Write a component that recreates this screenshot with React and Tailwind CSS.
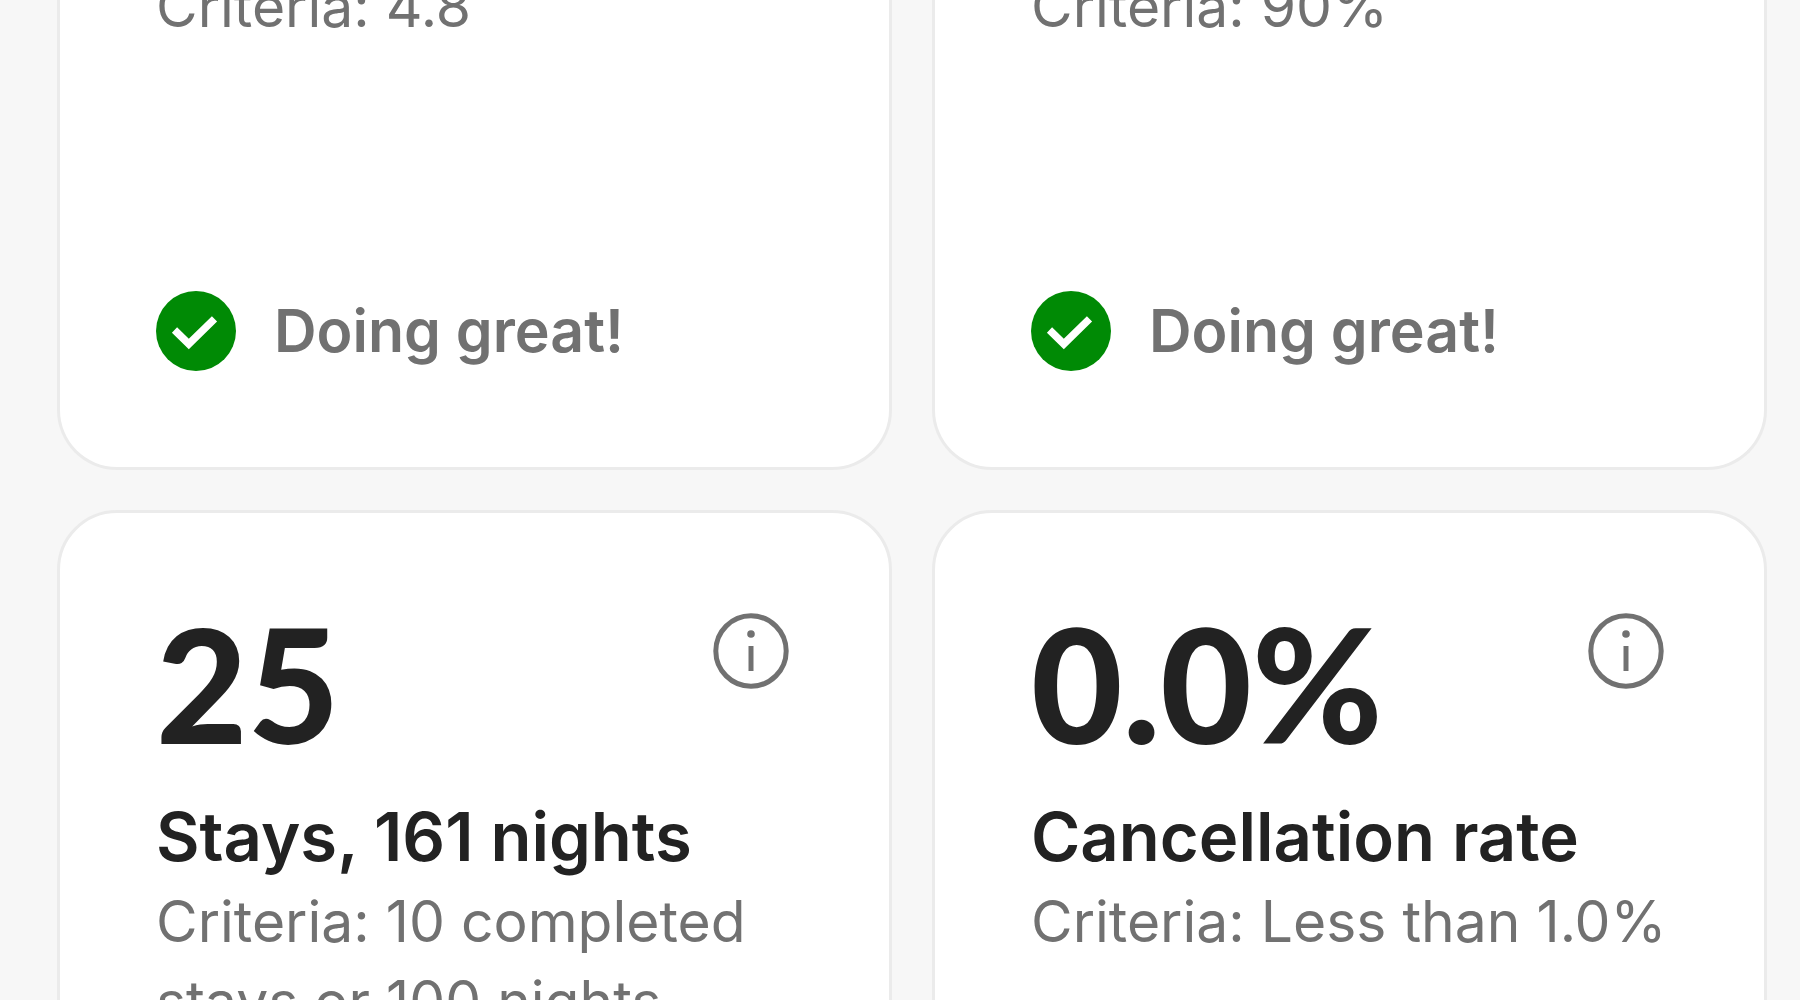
import React from "react";
import { clsx } from "clsx";

const topStats = [
  { id: "rating", criteria: "Criteria: 4.8" },
  { id: "response", criteria: "Criteria: 90%" },
];

const stats = [
  { id: "stays", value: "25", label: "Stays, 161 nights", criteria: "Criteria: 10 completed stays or 100 nights" },
  { id: "cancellation", value: "0.0%", label: "Cancellation rate", criteria: "Criteria: Less than 1.0%" },
];

function CheckIcon() {
  return (
    <svg className="size-20 shrink-0" viewBox="0 0 80 80" fill="none" aria-hidden="true">
      <circle cx="40" cy="40" r="40" fill="#008a05" />
      <path d="M18.5 39 L32.8 53 L58.5 27.8" stroke="#fff" strokeWidth="7.4" />
    </svg>
  );
}

function InfoIcon() {
  return (
    <svg className="size-[76px]" viewBox="0 0 76 76" fill="none" aria-hidden="true">
      <circle cx="38" cy="38" r="35.2" stroke="#717171" strokeWidth="5" />
      <circle cx="38" cy="21" r="3.8" fill="#717171" />
      <path d="M38 33 V58" stroke="#717171" strokeWidth="5" />
    </svg>
  );
}

function Card({ className, children }) {
  return (
    <article className={clsx("flex flex-col border-3 border-[#ebebeb] bg-white pl-24 pr-[88px]", className)}>
      {children}
    </article>
  );
}

function Criteria({ children }) {
  return <p className="text-[57px] leading-[80px] text-[#717171]">{children}</p>;
}

export default function App() {
  return (
    <main className="h-screen overflow-hidden bg-[#f7f7f7] pl-[57px] pr-[33px] font-['Inter',sans-serif] text-[#222222]">
      {/* the first row is scrolled partly out of view */}
      <div className="-mt-[33px] grid grid-cols-2 gap-10">
        {topStats.map((s) => (
          <Card key={s.id} className="min-h-[503px] justify-between rounded-b-[60px] border-t-0 pb-24">
            <Criteria>{s.criteria}</Criteria>
            <div className="flex items-center gap-[38px]">
              <CheckIcon />
              <span className="text-[59px] leading-[80px] font-semibold text-[#717171]">Doing great!</span>
            </div>
          </Card>
        ))}
        {stats.map((s) => (
          <Card key={s.id} className="min-h-[700px] rounded-[60px] pt-24 pb-24">
            <div className="flex items-start justify-between">
              <p className="font-['Lato',sans-serif] text-[158px] leading-[148px] font-black">{s.value}</p>
              <button type="button" aria-label={`About ${s.label}`} className="mt-1 mr-3 rounded-full">
                <InfoIcon />
              </button>
            </div>
            <h2 className="mt-[34px] text-[67px] leading-[91px] font-semibold">{s.label}</h2>
            <Criteria>{s.criteria}</Criteria>
          </Card>
        ))}
      </div>
    </main>
  );
}
